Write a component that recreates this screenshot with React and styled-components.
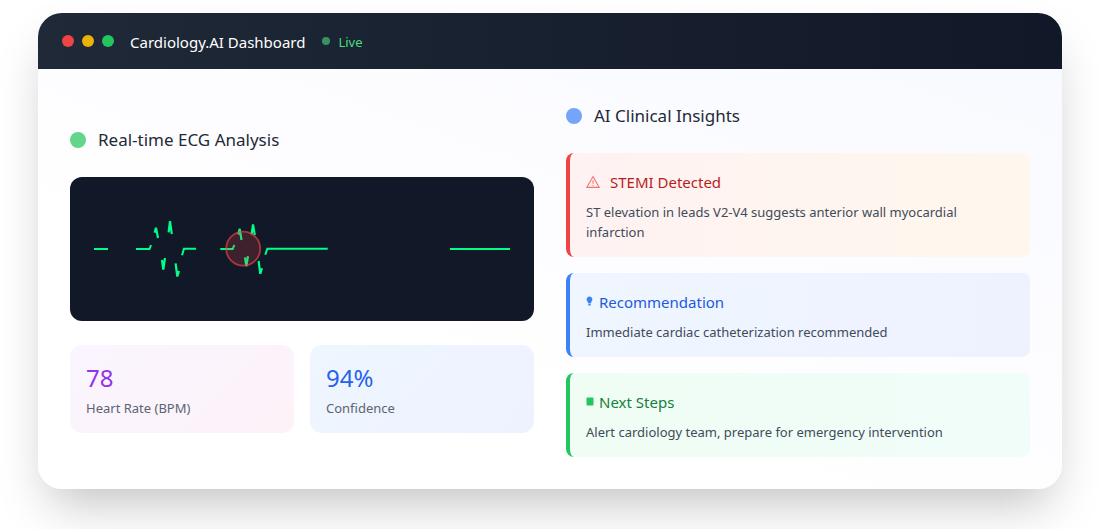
import React from 'react';
import styled, { createGlobalStyle } from 'styled-components';

const Global = createGlobalStyle`
  html, body { margin: 0; padding: 0; background: #fff; }
  body { font-family: "Noto Sans", "Liberation Sans", sans-serif; }
`;

const Page = styled.div`
  padding: 13px 38px 40px;
`;

const Card = styled.div`
  border-radius: 24px;
  overflow: hidden;
  background: linear-gradient(200deg, #f8f9ff 0%, #ffffff 70%);
  box-shadow: 0 25px 50px -12px rgba(0, 0, 0, 0.25);
`;

const TitleBar = styled.header`
  height: 56px;
  padding: 0 24px;
  display: flex;
  align-items: center;
  gap: 16px;
  background: linear-gradient(90deg, #1f2937, #111827);
`;

const Lights = styled.div`
  display: flex;
  gap: 8px;
`;

const Light = styled.span`
  width: 12px;
  height: 12px;
  border-radius: 50%;
  background: ${p => p.$color};
`;

const AppName = styled.span`
  color: #fff;
  font-size: 15px;
  line-height: 20px;
  margin-top: 2px;
`;

const Live = styled.div`
  display: flex;
  align-items: center;
  gap: 8px;
  color: #4ade80;
  font-size: 13px;
  margin-left: 1px;
`;

const LiveLabel = styled.span`
  margin-top: 2px;
`;

const LiveDot = styled.span`
  width: 8px;
  height: 8px;
  border-radius: 50%;
  background: #4ade80;
  opacity: 0.6;
`;

const Body = styled.main`
  padding: 32px;
  display: grid;
  grid-template-columns: 1fr 1fr;
  gap: 32px;
  align-items: center;
`;

const Column = styled.section`
  display: flex;
  flex-direction: column;
`;

const Heading = styled.h2`
  margin: 0 0 22px;
  display: flex;
  align-items: center;
  gap: 12px;
  font-size: 17px;
  line-height: 30px;
  font-weight: 400;
  color: #1f2937;
`;

const HeadingDot = styled.span`
  width: 16px;
  height: 16px;
  border-radius: 50%;
  background: ${p => p.$color};
`;

const EcgPanel = styled.div`
  height: 144px;
  border-radius: 12px;
  background: #111827;
  margin-bottom: 24px;
  overflow: hidden;
  svg { display: block; }
`;

const Stats = styled.div`
  display: grid;
  grid-template-columns: 1fr 1fr;
  gap: 16px;
`;

const Stat = styled.div`
  height: 88px;
  box-sizing: border-box;
  padding: 17px 16px 0;
  border-radius: 12px;
  background: linear-gradient(135deg, ${p => p.$from}, ${p => p.$to});
`;

const StatValue = styled.div`
  font-size: 24px;
  line-height: 32px;
  color: ${p => p.$color};
`;

const StatLabel = styled.div`
  margin-top: 2px;
  font-size: 13px;
  line-height: 24px;
  color: #5b6472;
`;

const Alerts = styled.div`
  display: flex;
  flex-direction: column;
  gap: 16px;
`;

const Alert = styled.div`
  padding: 17px 16px 15px;
  border-left: 4px solid ${p => p.$accent};
  border-radius: 8px;
  background: linear-gradient(90deg, ${p => p.$from}, ${p => p.$to});
`;

const AlertTitle = styled.div`
  display: flex;
  align-items: center;
  gap: ${p => p.$gap}px;
  margin-bottom: 8px;
  font-size: 15px;
  line-height: 24px;
  color: ${p => p.$color};
`;

const AlertText = styled.p`
  margin: 0;
  font-size: 13px;
  line-height: 20px;
  color: #414b5a;
`;

const SmallIcon = styled.svg`
  margin-bottom: 2px;
`;

const ecgLines = [
  '24,72 38,72',
  '66,72 79.5,72 81,68',
  '112,78.3 114,71.7 126,71.7',
  '150.3,72 162.7,72 164.3,68',
  '195.3,77.7 197.3,71.7 257.7,71.7',
  '380,72 440,72',
];

const ecgSpikes = [
  '84.6,55.6 86,50.8 88,61',
  '98.6,55.3 100,44.2 101.8,57',
  '92,83 93.3,92.5 95,81',
  '105.6,86.3 107.3,99.500 109,94',
  '168.3,57.6 169.7,51.8 171.5,63',
  '181.6,57.3 183,47.5 184.800,58',
  '175,80.3 176.3,89.2 178,79.3',
  '188.6,84 190.3,96.800 192,91.3',
];

function EcgTrace() {
  return (
    <svg width="464" height="144" viewBox="0 0 464 144">
      {ecgLines.map(points => (
        <polyline key={points} points={points} fill="none" stroke="#00ff88" strokeWidth="2" />
      ))}
      {ecgSpikes.map(points => (
        <polyline key={points} points={points} fill="none" stroke="#00ff88" strokeWidth="2.2" />
      ))}
      <circle cx="173.200" cy="71.700" r="17" fill="rgba(239,68,68,0.2)" stroke="rgba(239,68,68,0.65)" strokeWidth="1.8" />
    </svg>
  );
}

function WarnIcon() {
  return (
    <svg width="14" height="14" viewBox="0 0 14 14" fill="none" stroke="#f87171" strokeWidth="1.1">
      <path d="M7 1.6 13.2 12.4H.8Z" />
      <path d="M7 5.2v3.6M7 9.9v1" />
    </svg>
  );
}

function BulbIcon() {
  return (
    <SmallIcon width="7" height="10" viewBox="0 0 7 10" fill="#3b82f6">
      <path d="M3.5 0.5a3 3 0 0 1 1.700 5.400V7H1.800V5.900A3 3 0 0 1 3.500.5Z" />
      <rect x="2.300" y="7.500" width="2.400" height="2" />
    </SmallIcon>
  );
}

function ClipIcon() {
  return (
    <SmallIcon width="8" height="9" viewBox="0 0 8 9" fill="#22c55e">
      <rect x="0.500" y="0.500" width="7" height="8" rx="1" />
    </SmallIcon>
  );
}

export default function App() {
  return (
    <Page>
      <Global />
      <Card>
        <TitleBar>
          <Lights>
            <Light $color="#ef4444" />
            <Light $color="#eab308" />
            <Light $color="#22c55e" />
          </Lights>
          <AppName>Cardiology.AI Dashboard</AppName>
          <Live>
            <LiveDot />
            <LiveLabel>Live</LiveLabel>
          </Live>
        </TitleBar>
        <Body>
          <Column>
            <Heading>
              <HeadingDot $color="#63d68b" />
              Real-time ECG Analysis
            </Heading>
            <EcgPanel>
              <EcgTrace />
            </EcgPanel>
            <Stats>
              <Stat $from="#faf5ff" $to="#fdf2f8">
                <StatValue $color="#9333ea">78</StatValue>
                <StatLabel>Heart Rate (BPM)</StatLabel>
              </Stat>
              <Stat $from="#eff6ff" $to="#eef2ff">
                <StatValue $color="#2563eb">94%</StatValue>
                <StatLabel>Confidence</StatLabel>
              </Stat>
            </Stats>
          </Column>
          <Column>
            <Heading>
              <HeadingDot $color="#74a5f8" />
              AI Clinical Insights
            </Heading>
            <Alerts>
              <Alert $accent="#ef4444" $from="#fef2f2" $to="#fff7ed">
                <AlertTitle $color="#b91c1c" $gap={10}>
                  <WarnIcon />
                  STEMI Detected
                </AlertTitle>
                <AlertText>ST elevation in leads V2-V4 suggests anterior wall myocardial infarction</AlertText>
              </Alert>
              <Alert $accent="#3b82f6" $from="#eff6ff" $to="#eef2ff">
                <AlertTitle $color="#2159e0" $gap={6}>
                  <BulbIcon />
                  Recommendation
                </AlertTitle>
                <AlertText>Immediate cardiac catheterization recommended</AlertText>
              </Alert>
              <Alert $accent="#22c55e" $from="#f0fdf4" $to="#f0fdf9">
                <AlertTitle $color="#15803d" $gap={5}>
                  <ClipIcon />
                  Next Steps
                </AlertTitle>
                <AlertText>Alert cardiology team, prepare for emergency intervention</AlertText>
              </Alert>
            </Alerts>
          </Column>
        </Body>
      </Card>
    </Page>
  );
}
